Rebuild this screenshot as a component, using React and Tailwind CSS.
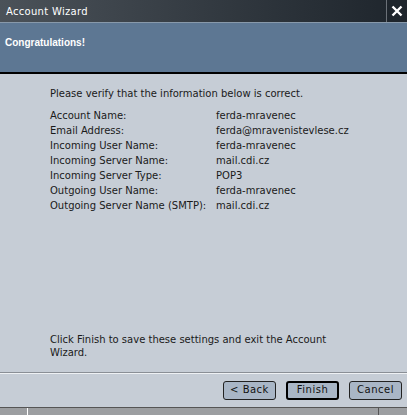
const rows = [
  ["Account Name:", "ferda-mravenec"],
  ["Email Address:", "ferda@mravenistevlese.cz"],
  ["Incoming User Name:", "ferda-mravenec"],
  ["Incoming Server Name:", "mail.cdi.cz"],
  ["Incoming Server Type:", "POP3"],
  ["Outgoing User Name:", "ferda-mravenec"],
  ["Outgoing Server Name (SMTP):", "mail.cdi.cz"],
];

const Btn = ({ children, active }) => (
  <button
    className={`h-[19px] w-[53px] rounded-[3px] bg-[#a9b6c6] text-[10px] text-[#111] leading-none tracking-[0.5px] ${
      active ? "border-2 border-black" : "border border-[#222]"
    }`}
  >
    {children}
  </button>
);

export default function App() {
  return (
    <div
      className="w-[407px] h-[415px] flex flex-col bg-[#c6cdd6] overflow-hidden"
      style={{ fontFamily: '"DejaVu Sans", sans-serif' }}
    >
      <div className="h-[22px] flex bg-gradient-to-r from-[#4b5259] to-[#1e252c]">
        <div className="flex-1 flex items-center pl-[6px] text-[10px] text-white tracking-[0.3px]">Account Wizard</div>
        <div className="w-[21px] border-l border-[#6b7178] bg-[#1e252c] flex items-center justify-center">
          <svg width="12" height="12" viewBox="0 0 12 12">
            <path d="M1.5 1.5 L10.5 10.5 M10.5 1.5 L1.5 10.5" stroke="white" strokeWidth="2.4" />
          </svg>
        </div>
      </div>
      <div className="h-[52px] bg-[#5d7793] border-t border-[#8899aa] border-b-2 border-b-black pl-[5px] pt-[12px]">
        <div className="text-[10px] font-bold text-white" style={{ fontFamily: '"Liberation Sans", sans-serif' }}>
          Congratulations!
        </div>
      </div>
      <div className="flex-1 flex flex-col pl-[50px] pt-[12px] text-[10px] text-[#1a1a1a]">
        <div>Please verify that the information below is correct.</div>
        <div className="mt-[7px] flex flex-col">
          {rows.map(([k, v]) => (
            <div key={k} className="flex h-[15px] items-center">
              <div className="w-[166px]">{k}</div>
              <div>{v}</div>
            </div>
          ))}
        </div>
        <div className="mt-auto mb-[13px] w-[300px] leading-[13px]">
          Click Finish to save these settings and exit the Account Wizard.
        </div>
      </div>
      <div className="h-[35px] border-t border-[#8a8f96] shadow-[inset_0_1px_0_#eef1f4] flex items-center justify-end gap-[10px] pr-[5px]">
        <Btn>&lt; Back</Btn>
        <Btn active>Finish</Btn>
        <Btn>Cancel</Btn>
      </div>
      <div className="h-[8px] border-t border-[#555] bg-[#9c9ea1] flex">
        <div className="w-[28px] border-r border-white"></div>
        <div className="flex-1 border-r border-[#555]"></div>
        <div className="w-[28px]"></div>
      </div>
    </div>
  );
}
